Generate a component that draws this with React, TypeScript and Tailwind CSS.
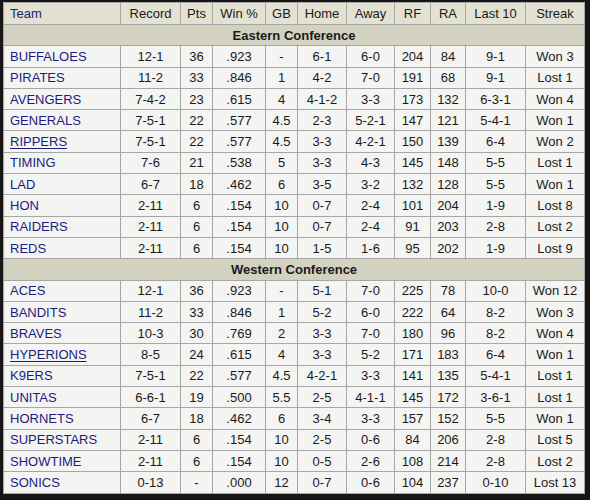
import React from "react";

type Row = [string, string, string, string, string, string, string, string, string, string, string];

const east: Row[] = [
  ["BUFFALOES", "12-1", "36", ".923", "-", "6-1", "6-0", "204", "84", "9-1", "Won 3"],
  ["PIRATES", "11-2", "33", ".846", "1", "4-2", "7-0", "191", "68", "9-1", "Lost 1"],
  ["AVENGERS", "7-4-2", "23", ".615", "4", "4-1-2", "3-3", "173", "132", "6-3-1", "Won 4"],
  ["GENERALS", "7-5-1", "22", ".577", "4.5", "2-3", "5-2-1", "147", "121", "5-4-1", "Won 1"],
  ["RIPPERS", "7-5-1", "22", ".577", "4.5", "3-3", "4-2-1", "150", "139", "6-4", "Won 2"],
  ["TIMING", "7-6", "21", ".538", "5", "3-3", "4-3", "145", "148", "5-5", "Lost 1"],
  ["LAD", "6-7", "18", ".462", "6", "3-5", "3-2", "132", "128", "5-5", "Won 1"],
  ["HON", "2-11", "6", ".154", "10", "0-7", "2-4", "101", "204", "1-9", "Lost 8"],
  ["RAIDERS", "2-11", "6", ".154", "10", "0-7", "2-4", "91", "203", "2-8", "Lost 2"],
  ["REDS", "2-11", "6", ".154", "10", "1-5", "1-6", "95", "202", "1-9", "Lost 9"],
];

const west: Row[] = [
  ["ACES", "12-1", "36", ".923", "-", "5-1", "7-0", "225", "78", "10-0", "Won 12"],
  ["BANDITS", "11-2", "33", ".846", "1", "5-2", "6-0", "222", "64", "8-2", "Won 3"],
  ["BRAVES", "10-3", "30", ".769", "2", "3-3", "7-0", "180", "96", "8-2", "Won 4"],
  ["HYPERIONS", "8-5", "24", ".615", "4", "3-3", "5-2", "171", "183", "6-4", "Won 1"],
  ["K9ERS", "7-5-1", "22", ".577", "4.5", "4-2-1", "3-3", "141", "135", "5-4-1", "Lost 1"],
  ["UNITAS", "6-6-1", "19", ".500", "5.5", "2-5", "4-1-1", "145", "172", "3-6-1", "Lost 1"],
  ["HORNETS", "6-7", "18", ".462", "6", "3-4", "3-3", "157", "152", "5-5", "Won 1"],
  ["SUPERSTARS", "2-11", "6", ".154", "10", "2-5", "0-6", "84", "206", "2-8", "Lost 5"],
  ["SHOWTIME", "2-11", "6", ".154", "10", "0-5", "2-6", "108", "214", "2-8", "Lost 2"],
  ["SONICS", "0-13", "-", ".000", "12", "0-7", "0-6", "104", "237", "0-10", "Lost 13"],
];

const underlined = new Set(["RIPPERS", "HYPERIONS"]);

const headers = ["Team", "Record", "Pts", "Win %", "GB", "Home", "Away", "RF", "RA", "Last 10", "Streak"];
const widths = [117, 60, 32, 53, 32, 49, 48, 36, 35, 60, 59];

function BodyRow({ r }: { r: Row }) {
  return (
    <tr className="h-[21.3px] bg-[#f4f4f3]">
      {r.map((c, i) =>
        i === 0 ? (
          <td key={i} className="border border-[#a6a6a6] pl-[6px] text-left text-[#1c1c7e]">
            <span className={underlined.has(c) ? "underline underline-offset-2" : ""}>{c}</span>
          </td>
        ) : (
          <td key={i} className="border border-[#a6a6a6] text-center text-[#1a1a1a]">
            {c}
          </td>
        )
      )}
    </tr>
  );
}

function Conf({ name }: { name: string }) {
  return (
    <tr className="h-[21.3px] bg-[#d3d2c0]">
      <td colSpan={11} className="border border-[#a6a6a6] text-center font-bold text-[#1a1a1a]">
        {name}
      </td>
    </tr>
  );
}

export default function App() {
  return (
    <div className="w-[590px] h-[500px] bg-[#161616] pl-[3px] pt-[2px] overflow-hidden">
      <table
        className="border-collapse table-fixed w-[582px] text-[13px] leading-none"
        style={{ fontFamily: "'Liberation Sans', Arial, sans-serif" }}
      >
        <colgroup>
          {widths.map((w, i) => (
            <col key={i} style={{ width: w }} />
          ))}
        </colgroup>
        <thead>
          <tr className="h-[22px] bg-[#e2e1d2]">
            {headers.map((h, i) => (
              <th
                key={i}
                className={
                  i === 0
                    ? "border border-[#a6a6a6] pl-[6px] text-left font-normal text-[#1c1c7e]"
                    : "border border-[#a6a6a6] text-center font-normal text-[#1a1a1a]"
                }
              >
                {h}
              </th>
            ))}
          </tr>
        </thead>
        <tbody>
          <Conf name="Eastern Conference" />
          {east.map((r) => (
            <BodyRow key={r[0]} r={r} />
          ))}
          <Conf name="Western Conference" />
          {west.map((r) => (
            <BodyRow key={r[0]} r={r} />
          ))}
        </tbody>
      </table>
    </div>
  );
}
